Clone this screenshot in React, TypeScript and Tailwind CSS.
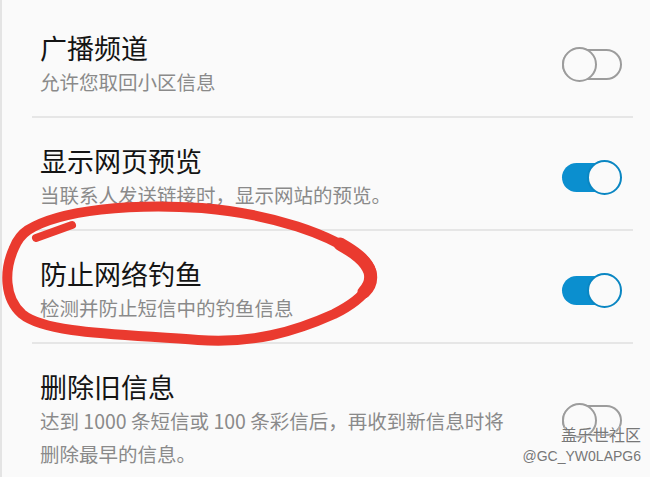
import React from 'react';

interface SettingRow {
  title: string;
  desc: React.ReactNode;
  on: boolean;
}

const rows: SettingRow[] = [
  { title: '广播频道', desc: '允许您取回小区信息', on: false },
  { title: '显示网页预览', desc: '当联系人发送链接时，显示网站的预览。', on: true },
  { title: '防止网络钓鱼', desc: '检测并防止短信中的钓鱼信息', on: true },
  {
    title: '删除旧信息',
    desc: (
      <>
        达到 1000 条短信或 100 条彩信后，再收到新信息时将
        <br />
        删除最早的信息。
      </>
    ),
    on: false,
  },
];

function Toggle({ on }: { on: boolean }) {
  return (
    <div className="relative w-[60px] h-[35px] shrink-0">
      {on ? (
        <>
          <div className="absolute left-0 right-[2px] top-[3px] h-[29px] rounded-full bg-[#0b8fcf]" />
          <div className="absolute right-0 top-0 w-[35px] h-[35px] rounded-full border-2 border-[#0a86c2] bg-[#fafafa]" />
        </>
      ) : (
        <>
          <div className="absolute left-0 right-0 top-[2px] h-[31px] rounded-full border-2 border-[#9c9c9c]" />
          <div className="absolute left-0 top-0 w-[35px] h-[35px] rounded-full border-2 border-[#9c9c9c] bg-[#fafafa]" />
        </>
      )}
    </div>
  );
}

export default function App() {
  return (
    <main
      className="relative min-h-screen overflow-hidden bg-[#fafafa] border-l-2 border-[#e4e4e4]"
      style={{ fontFamily: '"Noto Sans CJK SC", "Noto Sans", sans-serif' }}
    >
      <div className="pt-[5px] pl-[30px] pr-[17px]">
        {rows.map((row) => (
          <div
            key={row.title}
            className="flex items-center gap-4 border-b-2 border-[#e6e6e6] pl-2 pr-[11px] pt-[26px] pb-[18px]"
          >
            <div className="flex-1">
              <div className="text-[27px] leading-[34px] text-[#141414]">{row.title}</div>
              <div className="text-[19.5px] leading-[33px] text-[#8a8a8a]">{row.desc}</div>
            </div>
            <Toggle on={row.on} />
          </div>
        ))}
      </div>

      {/* hand-drawn red loop */}
      <svg
        className="absolute inset-0 pointer-events-none"
        width="650"
        height="477"
        viewBox="0 0 650 477"
        fill="none"
      >
        <path
          d="M26 230 C58 210 130 203 200 208 C270 214 330 234 362 260 C380 278 364 298 332 314 C292 332 250 344 196 340 C120 334 44 334 20 314 C2 298 2 270 12 248 C16 238 20 234 26 230"
          stroke="#ea3a2f"
          strokeWidth="10"
          strokeLinecap="round"
        />
        <path
          d="M338 244 C352 252 364 260 368 272 C370 280 368 286 362 292"
          stroke="#ea3a2f"
          strokeWidth="13"
          strokeLinecap="round"
        />
        <path d="M34 238 L70 225" stroke="#ea3a2f" strokeWidth="8" strokeLinecap="round" />
      </svg>

      {/* watermark */}
      <div className="absolute right-[9px] top-[426px] flex flex-col items-end leading-none text-[#777]">
        <span className="text-[16px]" style={{ textShadow: '0 0 2px #fff, 0 0 1px #fff' }}>
          盖乐世社区
        </span>
        <span
          className="mt-[7px] text-[14px]"
          style={{ fontFamily: '"Liberation Sans", Arial, sans-serif', textShadow: '0 0 2px #fff' }}
        >
          @GC_YW0LAPG6
        </span>
      </div>
    </main>
  );
}
